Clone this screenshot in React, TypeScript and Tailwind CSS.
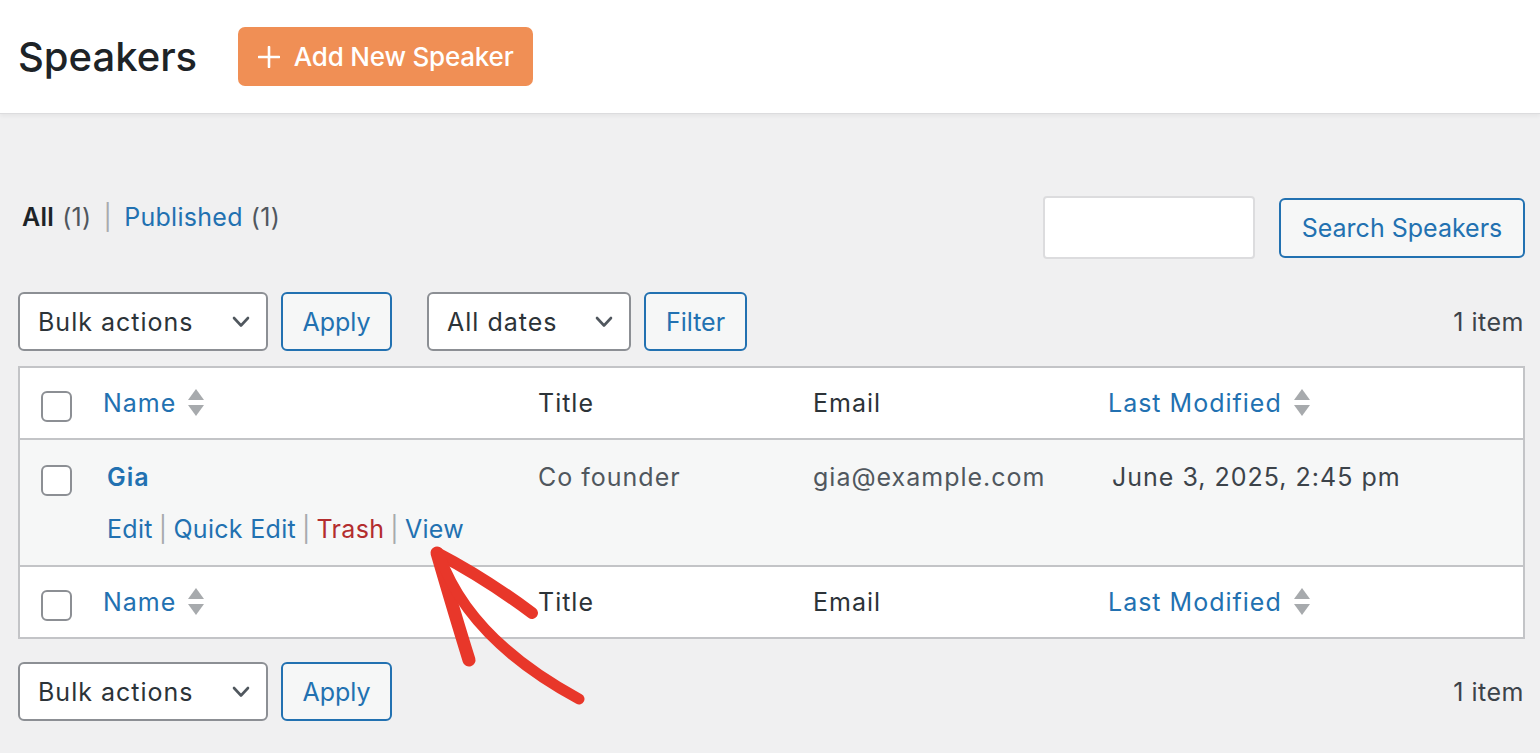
import React from "react";

function Checkbox() {
  return <span className="block h-[31px] w-[31px] rounded-[6px] border-2 border-[#8c8f94] bg-white" />;
}

function SortIcon() {
  return (
    <svg width="18" height="30" viewBox="0 0 18 30" className="ml-[11px] shrink-0">
      <polygon points="9,1 17,12 1,12" fill="#a7aaad" />
      <polygon points="1,17 17,17 9,28" fill="#a7aaad" />
    </svg>
  );
}

function Chevron() {
  return (
    <svg width="18" height="12" viewBox="0 0 18 12" className="shrink-0">
      <path d="M2 2 L9 9.5 L16 2" fill="none" stroke="#50575e" strokeWidth="2.6" strokeLinecap="round" strokeLinejoin="round" />
    </svg>
  );
}

function Select({ label, width }: { label: string; width: string }) {
  return (
    <div className={`${width} flex h-[59px] items-center justify-between rounded-[6px] border-2 border-[#8c8f94] bg-white pl-[18px] pr-[16px] text-[25px] tracking-[1px] text-[#2c3338]`}>
      <span>{label}</span>
      <Chevron />
    </div>
  );
}

function OutlineButton({ label, width }: { label: string; width: string }) {
  return (
    <button className={`${width} flex h-[59px] items-center justify-center rounded-[6px] border-2 border-[#2271b1] bg-[#f6f7f7] text-[25px] text-[#2271b1]`}>
      {label}
    </button>
  );
}

function HeadRow() {
  return (
    <div className="grid h-[70px] grid-cols-[70px_435px_275px_295px_1fr] items-center bg-white text-[25px] tracking-[1px] text-[#2c3338]">
      <div className="pl-[21px] pt-[6px]">
        <Checkbox />
      </div>
      <div className="flex items-center pl-[13px] text-[#2271b1]">
        <span>Name</span>
        <SortIcon />
      </div>
      <div className="pl-[13px]">Title</div>
      <div className="pl-[13px]">Email</div>
      <div className="flex items-center pl-[13px] text-[#2271b1]">
        <span>Last Modified</span>
        <SortIcon />
      </div>
    </div>
  );
}

export default function App() {
  return (
    <div className="relative min-h-[753px] overflow-hidden bg-[#f0f0f1] font-['Inter','Noto_Sans',sans-serif] leading-[30px] text-[#3c434a]">
      <header className="flex h-[114px] items-center gap-[41px] border-b border-[#dcdcde] bg-white pl-[18px] shadow-[0_2px_4px_rgba(0,0,0,0.05)]">
        <h1 className="text-[40px] font-medium text-[#1d2327]">Speakers</h1>
        <button className="flex h-[59px] w-[295px] items-center justify-center gap-[14px] rounded-[7px] bg-[#f08f55] text-[26px] font-medium text-white">
          <svg width="22" height="22" viewBox="0 0 22 22">
            <path d="M11 1 V21 M1 11 H21" stroke="white" strokeWidth="2.6" strokeLinecap="round" />
          </svg>
          <span className="tracking-[-0.2px]">Add New Speaker</span>
        </button>
      </header>

      <main className="pl-[18px] pr-[15px]">
        <div className="flex items-start justify-between pt-[82px]">
          <div className="mt-[6px] flex items-center pl-[4px] text-[25px] tracking-[0.3px]">
            <span className="font-semibold text-[#1d2327]">All</span>
            <span className="ml-[8px] text-[#50575e]">(1)</span>
            <span className="mx-[12px] text-[#a7aaad]">|</span>
            <span className="text-[#2271b1]">Published</span>
            <span className="ml-[8px] text-[#50575e]">(1)</span>
          </div>
          <div className="flex items-start gap-[24px]">
            <div className="h-[63px] w-[212px] rounded-[4px] border-2 border-[#dcdcde] bg-white" />
            <button className="mt-[2px] flex h-[60px] w-[246px] items-center justify-center rounded-[6px] border-2 border-[#2271b1] bg-[#f6f7f7] text-[25px] text-[#2271b1]">
              Search Speakers
            </button>
          </div>
        </div>

        <div className="mt-[33px] flex items-center">
          <Select label="Bulk actions" width="w-[250px]" />
          <div className="ml-[13px]">
            <OutlineButton label="Apply" width="w-[111px]" />
          </div>
          <div className="ml-[35px]">
            <Select label="All dates" width="w-[204px]" />
          </div>
          <div className="ml-[13px]">
            <OutlineButton label="Filter" width="w-[103px]" />
          </div>
          <span className="ml-auto pr-[1px] text-[25px] tracking-[0.5px] text-[#3c434a]">1 item</span>
        </div>

        <div className="mt-[15px] border-2 border-[#c3c4c7] bg-white">
          <div className="border-b-2 border-[#c3c4c7]">
            <HeadRow />
          </div>
          <div className="grid h-[127px] grid-cols-[70px_435px_275px_295px_1fr] border-b-2 border-[#c3c4c7] bg-[#f6f7f7] text-[25px] tracking-[1px]">
            <div className="pl-[21px] pt-[25px]">
              <Checkbox />
            </div>
            <div className="pl-[17px] pt-[22px]">
              <div className="font-semibold text-[#2271b1]">Gia</div>
              <div className="mt-[22px] flex items-center tracking-[0.3px] text-[#2271b1]">
                <span>Edit</span>
                <span className="mx-[6px] text-[#a7aaad]">|</span>
                <span>Quick Edit</span>
                <span className="mx-[6px] text-[#a7aaad]">|</span>
                <span className="text-[#b32d2e]">Trash</span>
                <span className="mx-[6px] text-[#a7aaad]">|</span>
                <span>View</span>
              </div>
            </div>
            <div className="pl-[13px] pt-[22px] text-[#50575e]">Co founder</div>
            <div className="pl-[13px] pt-[22px] text-[#50575e]">gia@example.com</div>
            <div className="pl-[17px] pt-[22px] text-[#3c434a]">June 3, 2025, 2:45 pm</div>
          </div>
          <HeadRow />
        </div>

        <div className="mt-[23px] flex items-center">
          <Select label="Bulk actions" width="w-[250px]" />
          <div className="ml-[13px]">
            <OutlineButton label="Apply" width="w-[111px]" />
          </div>
          <span className="ml-auto pr-[1px] text-[25px] tracking-[0.5px] text-[#3c434a]">1 item</span>
        </div>
      </main>

      <svg className="pointer-events-none absolute left-0 top-0" width="1540" height="753" viewBox="0 0 1540 753">
        <g fill="none" stroke="#e8372a" strokeLinecap="round" strokeLinejoin="round">
          <path d="M469 660 Q455 615 437 553" strokeWidth="13" />
          <path d="M437 553 Q485 578 532 613" strokeWidth="12" />
          <path d="M440 557 Q470 640 579 699" strokeWidth="11" />
        </g>
      </svg>
    </div>
  );
}
